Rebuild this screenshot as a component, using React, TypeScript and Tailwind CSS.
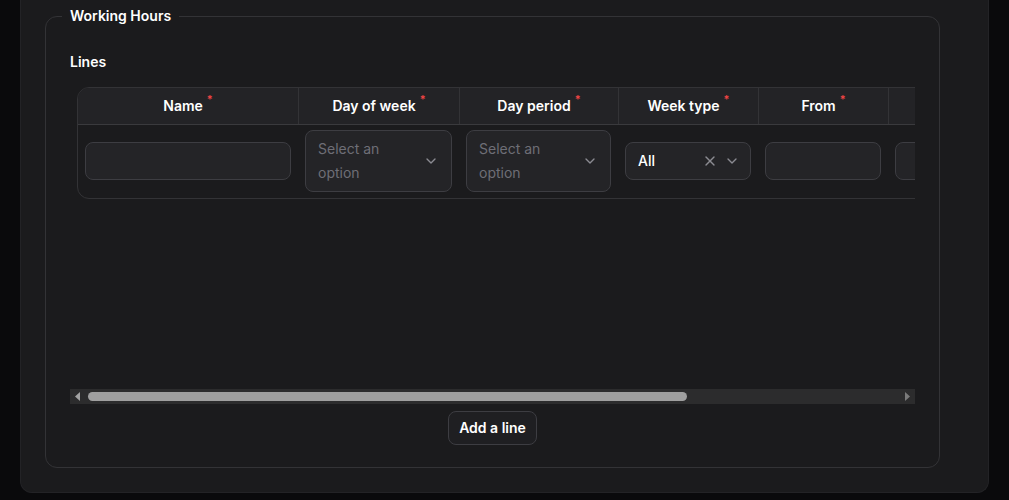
import { ChevronDown, X } from 'lucide-react';

type Column = { label: string; width: string; required?: boolean };

const columns: Column[] = [
  { label: 'Name', width: 'w-[221px]', required: true },
  { label: 'Day of week', width: 'w-[161px]', required: true },
  { label: 'Day period', width: 'w-[159px]', required: true },
  { label: 'Week type', width: 'w-[140px]', required: true },
  { label: 'From', width: 'w-[130px]', required: true },
  { label: 'To', width: 'w-[130px]', required: true },
  { label: '', width: 'flex-1' },
];

function Required() {
  return <span className="relative -top-1.5 ml-1 text-[11px] font-semibold text-[#ef4444]">*</span>;
}

function TextInput() {
  return <div className="h-[38px] w-full rounded-lg border border-[#3d3d42] bg-[#242427]" />;
}

function SelectBox() {
  return (
    <div className="flex w-full items-center rounded-lg border border-[#3d3d42] bg-[#242427] py-1.5 pl-3 pr-3">
      <span className="flex-1 pr-6 text-sm leading-6 text-[#6e6e76]">Select an option</span>
      <ChevronDown className="h-4 w-4 text-[#8b8b92]" strokeWidth={2} />
    </div>
  );
}

function WeekTypeSelect() {
  return (
    <div className="flex h-[38px] w-full items-center rounded-lg border border-[#3d3d42] bg-[#242427] pl-3 pr-2.5">
      <span className="flex-1 text-sm font-medium text-white">All</span>
      <X className="mr-1.5 h-4 w-4 text-[#8b8b92]" strokeWidth={2} />
      <ChevronDown className="h-4 w-4 text-[#8b8b92]" strokeWidth={2} />
    </div>
  );
}

// classic horizontal scrollbar under the lines table
function HScrollbar() {
  return (
    <div className="flex h-[15px] bg-[#2c2c2d]">
      <div className="flex w-[15px] items-center justify-center">
        <svg width="5" height="9" viewBox="0 0 5 9">
          <path d="M5 0 L0 4.5 L5 9 Z" fill="#a3a3a3" />
        </svg>
      </div>
      <div className="flex flex-1 items-center pl-[3px]">
        <div className="h-[9px] w-[599px] rounded-full bg-[#9f9f9f]" />
      </div>
      <div className="flex w-[15px] items-center justify-center">
        <svg width="5" height="9" viewBox="0 0 5 9">
          <path d="M0 0 L5 4.5 L0 9 Z" fill="#7a7a7a" />
        </svg>
      </div>
    </div>
  );
}

export default function App() {
  return (
    <div className="min-h-[500px] bg-[#0a0a0c] px-5 pb-[7px] font-['Inter',sans-serif] text-white">
      <div className="rounded-b-xl border border-t-0 border-[#232326] bg-[#1b1b1d] pb-6 pl-6 pr-12 pt-1.5">
        <fieldset className="min-w-0 rounded-xl border border-[#333336] px-6 pb-[22px] pt-[26px]">
          <legend className="-ml-2 px-2 text-sm font-semibold leading-5">Working Hours</legend>

          <h3 className="text-sm font-semibold leading-5">Lines</h3>

          <div className="mt-[15px]">
            <div className="h-[302px] overflow-hidden">
              <div className="w-[1150px] pl-[7px]">
                <div className="overflow-hidden rounded-xl border border-[#333336]">
                  <div className="flex h-[37px] border-b border-[#3a3a3d] bg-[#232326]">
                    {columns.map((col, i) => (
                      <div
                        key={i}
                        className={`${col.width} flex items-center justify-center border-r border-[#333336] text-sm font-semibold last:border-r-0`}
                      >
                        {col.label}
                        {col.required && <Required />}
                      </div>
                    ))}
                  </div>
                  <div className="flex h-[73px] items-center pb-[2px]">
                    <div className="w-[221px] pl-[7px] pr-2">
                      <TextInput />
                    </div>
                    <div className="w-[161px] pl-[6px] pr-2">
                      <SelectBox />
                    </div>
                    <div className="w-[159px] pl-[6px] pr-2">
                      <SelectBox />
                    </div>
                    <div className="w-[140px] pl-[6px] pr-2">
                      <WeekTypeSelect />
                    </div>
                    <div className="w-[130px] pl-[6px] pr-2">
                      <TextInput />
                    </div>
                    <div className="w-[130px] pl-[6px] pr-2">
                      <TextInput />
                    </div>
                    <div className="flex-1" />
                  </div>
                </div>
              </div>
            </div>
            <HScrollbar />
          </div>

          <div className="mt-[7px] flex justify-center">
            <button className="h-[34px] rounded-lg border border-[#3d3d42] bg-[#1f1f22] px-[10px] text-sm font-semibold text-white">
              Add a line
            </button>
          </div>
        </fieldset>
      </div>
    </div>
  );
}
